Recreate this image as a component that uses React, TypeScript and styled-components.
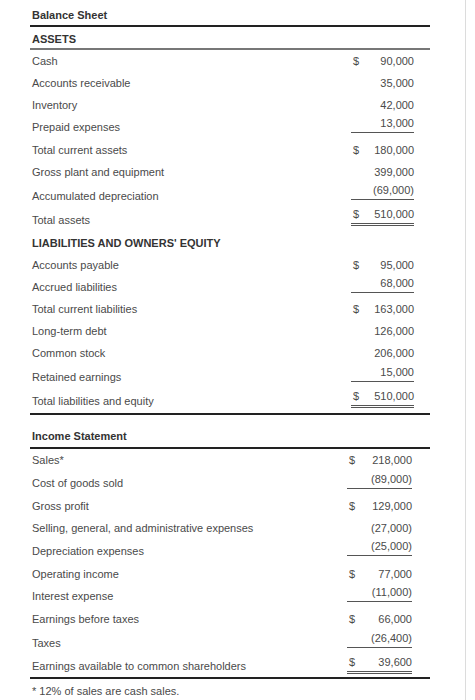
import styled, { createGlobalStyle } from "styled-components";

type Line = "single" | "double";

type Item = {
  label: string;
  amount?: string;
  dollar?: boolean;
  line?: Line;
  h: number;
  lift?: number;
  heading?: boolean;
};

const balance: Item[] = [
  { label: "Cash", amount: "90,000", dollar: true, h: 22 },
  { label: "Accounts receivable", amount: "35,000", h: 22 },
  { label: "Inventory", amount: "42,000", h: 22 },
  { label: "Prepaid expenses", amount: "13,000", line: "single", h: 23, lift: 6 },
  { label: "Total current assets", amount: "180,000", dollar: true, h: 22 },
  { label: "Gross plant and equipment", amount: "399,000", h: 23 },
  { label: "Accumulated depreciation", amount: "(69,000)", line: "single", h: 25, lift: 9 },
  { label: "Total assets", amount: "510,000", dollar: true, line: "double", h: 23, lift: 8 },
  { label: "LIABILITIES AND OWNERS' EQUITY", heading: true, h: 22 },
  { label: "Accounts payable", amount: "95,000", dollar: true, h: 22 },
  { label: "Accrued liabilities", amount: "68,000", line: "single", h: 22, lift: 4 },
  { label: "Total current liabilities", amount: "163,000", dollar: true, h: 22 },
  { label: "Long-term debt", amount: "126,000", h: 22 },
  { label: "Common stock", amount: "206,000", h: 23 },
  { label: "Retained earnings", amount: "15,000", line: "single", h: 24, lift: 7 },
  { label: "Total liabilities and equity", amount: "510,000", dollar: true, line: "double", h: 24, lift: 5 },
];

const income: Item[] = [
  { label: "Sales*", amount: "218,000", dollar: true, h: 22 },
  { label: "Cost of goods sold", amount: "(89,000)", line: "single", h: 24, lift: 5 },
  { label: "Gross profit", amount: "129,000", dollar: true, h: 22 },
  { label: "Selling, general, and administrative expenses", amount: "(27,000)", h: 23 },
  { label: "Depreciation expenses", amount: "(25,000)", line: "single", h: 23, lift: 8 },
  { label: "Operating income", amount: "77,000", dollar: true, h: 22 },
  { label: "Interest expense", amount: "(11,000)", line: "single", h: 23, lift: 5 },
  { label: "Earnings before taxes", amount: "66,000", dollar: true, h: 23 },
  { label: "Taxes", amount: "(26,400)", line: "single", h: 24, lift: 7 },
  { label: "Earnings available to common shareholders", amount: "39,600", dollar: true, line: "double", h: 22, lift: 3 },
];

export default function App() {
  return (
    <>
      <GlobalStyle />
      <Page>
        <Sheet>
          <Section>
            <Title $top={9}>Balance Sheet</Title>
            <SubHead>ASSETS</SubHead>
            {balance.map((it) => (
              <Entry key={it.label} item={it} right={16} width={63} />
            ))}
          </Section>
          <Section>
            <Title $top={15}>Income Statement</Title>
            {income.map((it) => (
              <Entry key={it.label} item={it} right={18} width={65} />
            ))}
          </Section>
          <Footnote>* 12% of sales are cash sales.</Footnote>
        </Sheet>
      </Page>
    </>
  );
}

function Entry({ item, right, width }: { item: Item; right: number; width: number }) {
  return (
    <Row $h={item.h} $right={right}>
      <Label $heading={item.heading}>{item.label}</Label>
      {item.amount && (
        <Amount $w={width} $line={item.line} $lift={item.lift ?? 0}>
          <span>{item.dollar ? "$" : ""}</span>
          <span>{item.amount}</span>
        </Amount>
      )}
    </Row>
  );
}

const GlobalStyle = createGlobalStyle`
  body {
    margin: 0;
    background: #fff;
    font-family: "Liberation Sans", Arial, sans-serif;
    font-size: 11px;
    color: #4a4a4a;
  }
`;

const Page = styled.div`
  box-sizing: border-box;
  width: 466px;
  min-height: 100vh;
  padding-left: 30px;
  border-right: 1px solid #dcdcdc;
`;

const Sheet = styled.div`
  width: 400px;
`;

const Section = styled.div`
  border-bottom: 2px solid #222;
`;

const Title = styled.div<{ $top: number }>`
  padding: ${(p) => p.$top}px 0 ${(p) => (p.$top > 10 ? 4 : 3)}px 2px;
  line-height: 13px;
  font-weight: bold;
  color: #333;
  border-bottom: 2px solid #222;
`;

const SubHead = styled.div`
  padding: 6px 0 2px 2px;
  line-height: 13px;
  font-weight: bold;
  color: #333;
  border-bottom: 2px solid #777;
`;

const Row = styled.div<{ $h: number; $right: number }>`
  display: flex;
  align-items: center;
  justify-content: space-between;
  height: ${(p) => p.$h}px;
  padding-right: ${(p) => p.$right}px;
`;

const Label = styled.div<{ $heading?: boolean }>`
  padding-left: 2px;
  line-height: 13px;
  font-weight: ${(p) => (p.$heading ? "bold" : "normal")};
  color: ${(p) => (p.$heading ? "#333" : "#4a4a4a")};
`;

const Amount = styled.div<{ $w: number; $line?: Line; $lift: number }>`
  box-sizing: border-box;
  display: flex;
  justify-content: space-between;
  width: ${(p) => p.$w}px;
  padding-left: 2px;
  line-height: 13px;
  margin-bottom: ${(p) => p.$lift}px;
  padding-bottom: ${(p) => (p.$line ? 2 : 0)}px;
  border-bottom: ${(p) =>
    p.$line === "double" ? "3px double #555" : p.$line === "single" ? "1px solid #555" : "none"};
`;

const Footnote = styled.div`
  padding: 6px 0 0 2px;
  line-height: 13px;
  color: #4a4a4a;
`;
